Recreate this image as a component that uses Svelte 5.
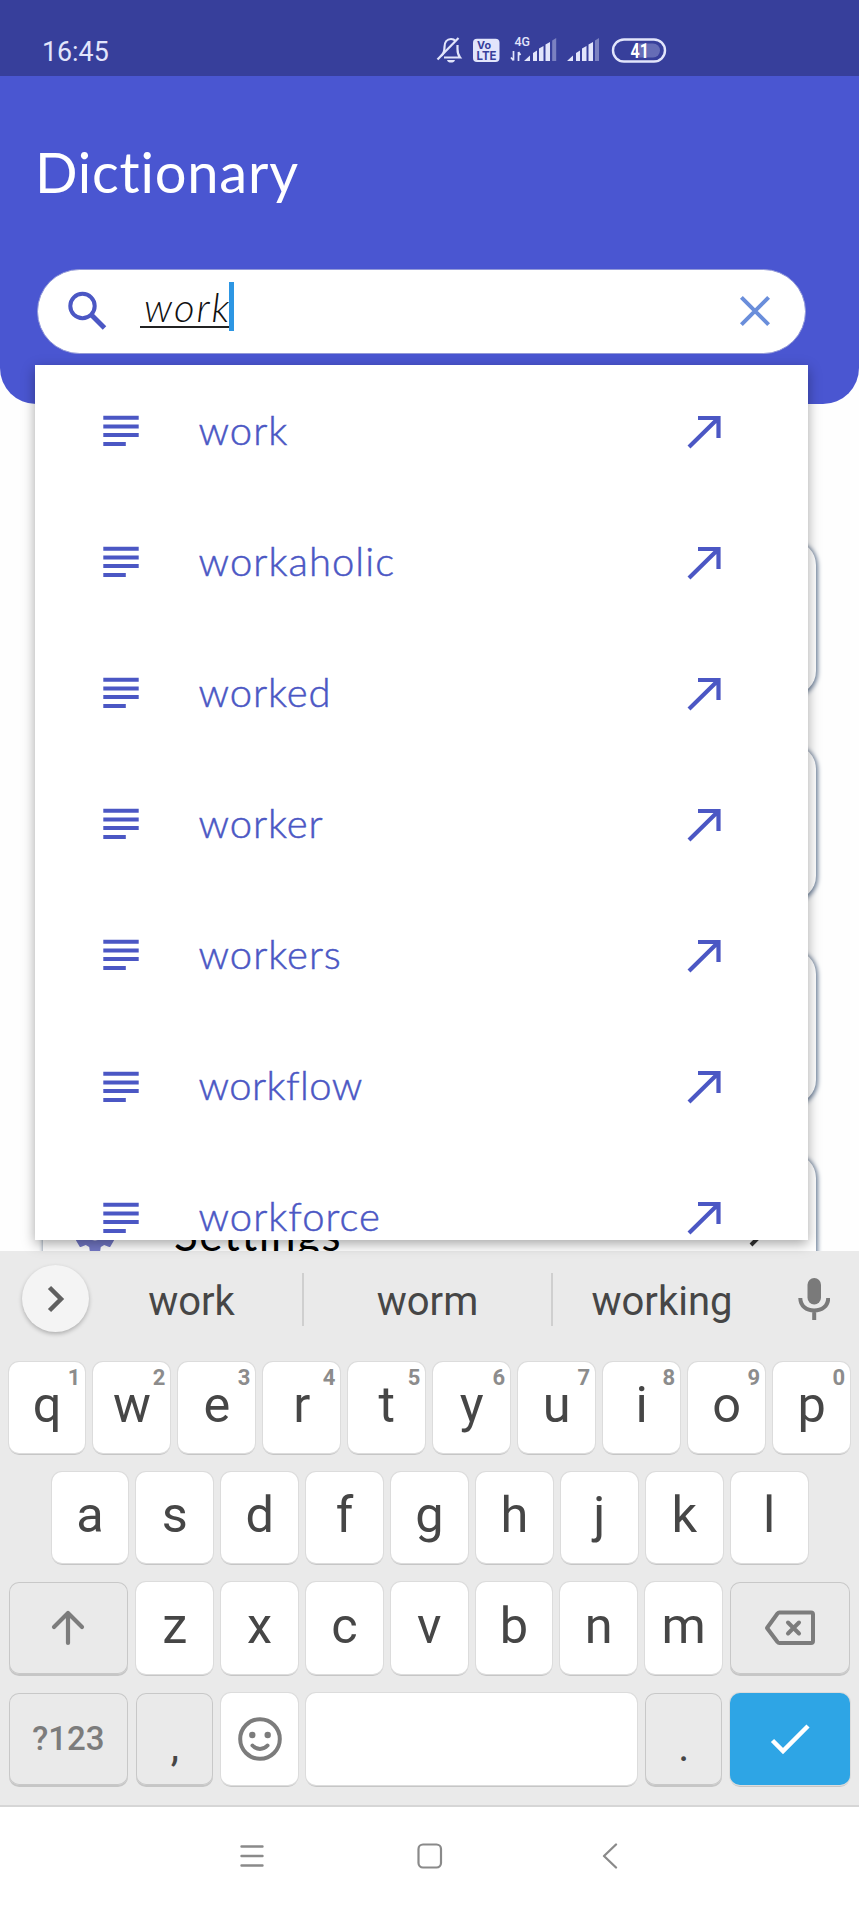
<script>
  const words = [
    { text: 'work', spacing: 1 },
    { text: 'workaholic', spacing: 1.05 },
    { text: 'worked', spacing: 0.9 },
    { text: 'worker', spacing: 0.9 },
    { text: 'workers', spacing: 1 },
    { text: 'workflow', spacing: 0.4 },
    { text: 'workforce', spacing: 1 }
  ];
  const cards = ['', '', '', 'Settings'];
  const topRow = 'qwertyuiop'.split('').map((k, i) => ({ k, hint: (i + 1) % 10 }));
  const homeRow = 'asdfghjkl'.split('');
  const bottomRow = 'zxcvbnm'.split('');
</script>

<div class="screen">
  <div class="status">
    <span class="time">16:45</span>
    <svg class="status-icons" width="232" height="32" viewBox="0 0 232 32" fill="none">
      <g stroke="#e2e5fb" stroke-width="2.2">
        <path d="M5 21c2.500-2 3.500-4.500 3.500-9 0-5 2.500-8 6.500-8 2 0 3.500.8 4.500 2M21.500 10v4c0 4 .5 6 2.500 8.500H8" />
        <path d="M1.500 24.500L22.500 3" />
      </g>
      <path d="M11 25h8c-.5 1.800-2 2.600-4 2.600S11.500 26.800 11 25z" fill="#e2e5fb" />
      <rect x="37" y="3.800" width="26.500" height="23.200" rx="4" fill="#e2e5fb" />
      <text x="41" y="13.800" class="badge-text" font-size="10.500" textLength="14" lengthAdjust="spacingAndGlyphs">Vo</text>
      <text x="40.500" y="24.600" class="badge-text" font-size="11.500" textLength="20" lengthAdjust="spacingAndGlyphs">LTE</text>
      <text x="78.500" y="11" class="net" textLength="15.500" lengthAdjust="spacingAndGlyphs">4G</text>
      <path d="M77.500 16v9.500M77.500 25.500l-2.500-3M82.500 26v-9M82.500 17l2 3" stroke="#e2e5fb" stroke-width="1.700" />
      <g fill="#e2e5fb">
        <path d="M88 26l6-5.500V26zM97 26v-8l4-2.500V26zM103 26V13.500l4.500-2.500v15zM109.500 26V9.500l4.500-2.500v19z" />
        <path d="M131 26l6-5.500V26zM140 26v-8l4-2.500V26zM146 26V13.500l4.500-2.500v15zM152.500 26V9.500l4.500-2.500v19z" />
        <path d="M116.200 26V5.500l4-2.500v23zM159 26V5.500l4-2.500v23z" opacity=".4" />
      </g>
      <rect x="177" y="4.500" width="52" height="22" rx="11" stroke="#e2e5fb" stroke-width="2.400" />
      <path d="M203 8.500h14a7 7 0 0 1 0 14h-14z" fill="#e2e5fb" opacity=".28" />
      <text x="194.500" y="22.600" class="battery" textLength="18.500" lengthAdjust="spacingAndGlyphs">41</text>
    </svg>
  </div>

  <header>
    <h1>Dictionary</h1>
    <div class="search">
      <svg class="magnifier" width="40" height="40" viewBox="0 0 40 40" fill="none" stroke="#4b57c4">
        <circle cx="14.500" cy="15" r="12.200" stroke-width="4" />
        <path d="M24 24.500L36.500 37" stroke-width="5" />
      </svg>
      <span class="query">work</span><span class="caret"></span>
      <svg class="clear" width="32" height="32" viewBox="0 0 32 32" stroke="#6a8edb" stroke-width="4">
        <path d="M2.400 2.400l27.200 27.200M29.600 2.400L2.400 29.600" />
      </svg>
    </div>
  </header>

  <main>
    {#each cards as label}
      <div class="card">
        {#if label}
          <svg class="gear" width="42" height="42" viewBox="2 2 20 20" fill="#7378c6">
            <path d="M19.140 12.940c.04-.3.06-.61.06-.94 0-.32-.02-.64-.07-.94l2.030-1.580c.18-.14.23-.41.12-.61l-1.920-3.320c-.12-.22-.37-.29-.59-.22l-2.390.96c-.5-.38-1.030-.7-1.620-.94l-.36-2.540c-.04-.24-.24-.41-.48-.41h-3.840c-.24 0-.43.17-.47.41l-.36 2.540c-.59.24-1.130.57-1.620.94l-2.390-.96c-.22-.08-.47 0-.59.22L2.740 8.870c-.12.21-.08.47.12.61l2.030 1.580c-.05.3-.09.63-.09.94s.02.64.07.94l-2.030 1.580c-.18.14-.23.41-.12.61l1.920 3.320c.12.22.37.29.59.22l2.390-.96c.5.38 1.030.7 1.620.94l.36 2.540c.05.24.24.41.48.41h3.840c.24 0 .44-.17.47-.41l.36-2.540c.59-.24 1.130-.56 1.620-.94l2.390.96c.22.08.47 0 .59-.22l1.920-3.320c.12-.22.07-.47-.12-.61l-2.010-1.580zM12 15.600a3.600 3.600 0 1 1 0-7.200 3.600 3.600 0 0 1 0 7.200z" />
          </svg>
          <span class="card-label">{label}</span>
          <svg class="go" width="20" height="30" viewBox="0 0 20 30" fill="none" stroke="#333" stroke-width="4"><path d="M3 3l12 12L3 27" /></svg>
        {/if}
      </div>
    {/each}
  </main>

  <ul class="dropdown">
    {#each words as word}
      <li>
        <svg class="lines" width="36" height="32" viewBox="0 0 36 32" fill="#4b57c4">
          <path d="M.3.700h35.400v4H.3zM.3 9.400h35.400v4H.3zM.3 18.100h35.400v4H.3zM.3 26.900h22.500v4H.3z" />
        </svg>
        <span class="word" style="letter-spacing: {word.spacing}px">{word.text}</span>
        <svg class="arrow" width="34" height="34" viewBox="0 0 34 34" fill="none" stroke="#4b57c4" stroke-width="4.200">
          <path d="M11 3h20.500v20M31 3.500L2 32" />
        </svg>
      </li>
    {/each}
  </ul>

  <section class="keyboard">
    <div class="suggestions">
      <div class="expand">
        <svg width="18" height="28" viewBox="0 0 18 28" fill="none" stroke="#606060" stroke-width="4.500"><path d="M2.500 2.500L14 14 2.500 25.500" /></svg>
      </div>
      <span class="sug s1">work</span><i></i>
      <span class="sug s2">worm</span><i></i>
      <span class="sug s3">working</span>
      <svg class="mic" width="32" height="44" viewBox="0 0 32 44" fill="none">
        <rect x="9.500" y="1" width="13.500" height="26.500" rx="6.750" fill="#7a7a7a" />
        <path d="M2.300 21c0 8 6.200 12.500 13.900 12.500S30.200 29 30.200 21M16.200 33v10" stroke="#7a7a7a" stroke-width="4" />
      </svg>
    </div>

    <div class="row r1">
      {#each topRow as key}
        <div class="key">{key.k}<sup>{key.hint}</sup></div>
      {/each}
    </div>
    <div class="row r2">
      {#each homeRow as key}<div class="key">{key}</div>{/each}
    </div>
    <div class="row r3">
      <div class="key gray wide">
        <svg width="34" height="36" viewBox="0 0 34 36" fill="none" stroke="#7c7c7c" stroke-width="4.200" stroke-linecap="round" stroke-linejoin="round"><path d="M17 33V3M3 17L17 3l14 14" /></svg>
      </div>
      {#each bottomRow as key}<div class="key">{key}</div>{/each}
      <div class="key gray wide">
        <svg width="52" height="36" viewBox="0 0 52 36" fill="none" stroke="#7c7c7c" stroke-width="4" stroke-linejoin="round"><path d="M15.500 2.500H47a2 2 0 0 1 2 2V31a2 2 0 0 1-2 2H15.500a3 3 0 0 1-2-1L3 18 13.500 3.500a3 3 0 0 1 2-1z" /><path d="M24 12.500l11 11M35 12.500l-11 11" stroke-linecap="round" /></svg>
      </div>
    </div>
    <div class="row r4">
      <div class="key gray wide mode">?123</div>
      <div class="key gray punct">,</div>
      <div class="key">
        <svg width="46" height="46" viewBox="0 0 46 46" fill="none" stroke="#7c7c7c" stroke-width="4"><circle cx="23" cy="23" r="19.800" /><g fill="#7c7c7c" stroke="none"><circle cx="15.300" cy="19" r="3.200" /><circle cx="30.700" cy="19" r="3.200" /></g><path d="M15.500 29.500c4 4.500 11 4.500 15 0" stroke-linecap="round" /></svg>
      </div>
      <div class="key space"></div>
      <div class="key gray punct">.</div>
      <div class="key wide done">
        <svg width="40" height="32" viewBox="0 0 40 32" fill="none" stroke="#fff" stroke-width="4.500"><path d="M2.500 17.500L13 28 38 3" /></svg>
      </div>
    </div>
  </section>

  <nav>
    <svg width="24" height="24" viewBox="0 0 24 24" fill="none" stroke="#8a8a8a" stroke-width="2.400" stroke-linecap="round"><path d="M1.500 2.500h21M1.500 12h21M1.500 21.500h21" /></svg>
    <svg class="home" width="26" height="26" viewBox="0 0 26 26" fill="none" stroke="#8a8a8a" stroke-width="2.200"><rect x="1.500" y="1.500" width="22.500" height="23" rx="4.500" /></svg>
    <svg class="back" width="16" height="26" viewBox="0 0 16 26" fill="none" stroke="#8a8a8a" stroke-width="2.300" stroke-linecap="round" stroke-linejoin="round"><path d="M14 1.500L2 13l12 11.500" /></svg>
  </nav>
</div>

<style>
  :global(body) { background: #fff; }
  * { box-sizing: border-box; }
  svg { display: block; flex: none; }
  .screen {
    position: relative;
    width: 859px;
    height: 1908px;
    display: flex;
    flex-direction: column;
    overflow: hidden;
    background: #fefefe;
    font-family: Roboto, sans-serif;
  }
  .status {
    height: 75.500px;
    flex: none;
    background: #373f9b;
    display: flex;
    align-items: flex-start;
    padding: 35px 0 0 42px;
  }
  .time { width: 394px; font-size: 26.800px; line-height: 34px; color: #e2e5fb; }
  .badge-text { fill: #373f9b; font-family: Inter, sans-serif; font-weight: 700; }
  .net { fill: #e2e5fb; font-size: 13.500px; font-weight: 500; }
  .battery { fill: #fff; font-size: 20px; font-weight: 700; }
  header {
    height: 328px;
    flex: none;
    background: #4a56d1;
    border-radius: 0 0 36px 36px;
    padding: 61px 53px 0 37px;
  }
  h1 {
    margin: 0 0 0 -2px;
    height: 132.500px;
    font-family: Lato, sans-serif;
    font-weight: 400;
    font-size: 56px;
    line-height: 70px;
    letter-spacing: .8px;
    color: #fff;
  }
  .search {
    height: 85px;
    border-radius: 43px;
    border: 1px solid #9299d8;
    background: #fff;
    display: flex;
    align-items: flex-start;
    padding: 12px 34px 0 30px;
  }
  .magnifier { margin-top: 9px; }
  .query {
    margin-left: 32px;
    width: 89px;
    height: 46px;
    border-bottom: 2px solid #222;
    font-family: Lato, sans-serif;
    font-weight: 300;
    font-style: italic;
    font-size: 40px;
    line-height: 50px;
    padding-left: 4px;
    letter-spacing: 2px;
    color: #111;
    white-space: nowrap;
  }
  .caret { width: 5px; height: 49px; background: #2d96e3; }
  .clear { margin: 13px 0 0 auto; }
  main {
    height: 847.500px;
    flex: none;
    overflow: hidden;
    padding: 137px 43px 0 43px;
    display: flex;
    flex-direction: column;
    gap: 50px;
  }
  .card {
    height: 154.500px;
    flex: none;
    border-radius: 24px;
    background: #fff;
    box-shadow: 1px 1px 4px 1px #7688a0;
    display: flex;
    align-items: center;
    padding: 0 48px 0 31px;
  }
  .gear { margin-top: 3px; }
  .card-label {
    margin: 6px auto 0 58px;
    font-family: Lato, sans-serif;
    font-size: 44px;
    line-height: 50px;
    letter-spacing: 1.600px;
    color: #000;
  }
  .go { margin-top: 3px; }
  .dropdown {
    position: absolute;
    left: 35px;
    top: 365px;
    width: 773px;
    height: 875px;
    margin: 0;
    padding: 0;
    list-style: none;
    overflow: hidden;
    background: #fff;
    box-shadow: 0 4px 12px rgba(0, 0, 0, .35);
    z-index: 2;
  }
  li {
    height: 131.100px;
    display: flex;
    align-items: center;
    padding: 0 87px 0 68px;
  }
  .lines { margin-top: 1px; }
  .word {
    margin: -2px auto 0 59.500px;
    font-family: Lato, sans-serif;
    font-weight: 300;
    font-size: 40px;
    line-height: 48px;
    color: #4b57c4;
    -webkit-text-stroke: .5px #4b57c4;
  }
  .arrow { margin-top: 2px; }
  .keyboard {
    height: 556px;
    flex: none;
    background: #eaeaea;
    border-bottom: 2px solid #d6d6d6;
    color: #464646;
    position: relative;
    z-index: 1;
  }
  .suggestions {
    height: 111px;
    display: flex;
    align-items: flex-start;
    padding-left: 22px;
  }
  .expand {
    width: 67px;
    height: 67px;
    margin-top: 14px;
    border-radius: 50%;
    background: #f4f4f4;
    box-shadow: 0 2px 4px rgba(0, 0, 0, .25);
    display: flex;
    align-items: center;
    justify-content: center;
  }
  .sug { flex: none; margin-top: 27px; font-size: 40px; line-height: 48px; text-align: center; }
  .s1 { width: 213px; padding-right: 8px; }
  .s2 { width: 247px; }
  .s3 { width: 218px; }
  .sug + i { width: 2px; height: 53px; margin-top: 22px; background: #cfcfcf; }
  .mic { margin: 26px 0 0 27px; }
  .row { display: flex; gap: 8px; padding: 0 9px 0 8.500px; }
  .r1 { height: 110px; }
  .r2 { height: 110px; padding: 0 51.500px; }
  .r3 { height: 110.500px; }
  .key {
    position: relative;
    flex: 1 1 0;
    min-width: 0;
    height: 91px;
    border-radius: 10px;
    background: #fff;
    box-shadow: 0 0 0 1px #dcdcdc, 0 2px 0 0 #c6c6c6;
    text-align: center;
    font-size: 50.500px;
    line-height: 85px;
  }
  .r3 .key, .r4 .key { display: flex; justify-content: center; align-items: center; height: 92px; flex: none; width: 76.800px; }
  .r3 .key { line-height: 87px; align-items: flex-start; }
  .r3 .key.gray { align-items: center; }
  .row .key.wide { width: 119.900px; }
  .row .key.space { width: 332px; flex: 1; }
  .key.gray { background: #eaeaea; box-shadow: inset 0 0 0 1px #c8c8c8, 0 2px 0 0 #c6c6c6; }
  .key.done { background: #2ea5e5; }
  .key.mode { font-size: 33px; font-weight: 500; color: #7c7c7c; }
  .key.punct { font-size: 42px; padding-top: 16px; }
  sup {
    position: absolute;
    right: 5px;
    top: 2px;
    font-size: 22px;
    line-height: 28px;
    font-weight: 700;
    color: #8c8c8c;
  }
  nav {
    height: 101px;
    flex: none;
    background: #fff;
    display: flex;
    align-items: flex-start;
    padding: 37px 0 0 240px;
  }
  .home { margin: -1px 0 0 153px; }
  .back { margin: -1px 0 0 159px; }
</style>
